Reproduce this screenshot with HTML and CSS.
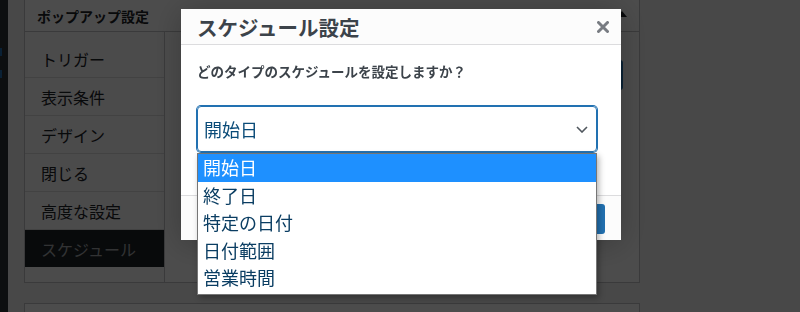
FILE: index.html
```html
<!DOCTYPE html>
<html lang="ja">
<head>
  <meta charset="UTF-8">
  <title>ポップアップ設定</title>
  <link rel="stylesheet" href="styles.css">
</head>
<body>

  <div class="admin">
    <!-- Admin menu edge -->
    <div class="admin-menu">
      <span class="menu-mark"></span>
      <span class="menu-mark"></span>
    </div>

    <div class="content">
      <!-- Popup settings box -->
      <div class="postbox">
        <div class="postbox-header">
          <h2>ポップアップ設定</h2>
          <span class="toggle-arrow"></span>
        </div>
        <div class="postbox-inside">
          <ul class="tabs">
            <li class="tab">トリガー</li>
            <li class="tab">表示条件</li>
            <li class="tab">デザイン</li>
            <li class="tab">閉じる</li>
            <li class="tab">高度な設定</li>
            <li class="tab tab-active">スケジュール</li>
          </ul>
          <div class="tab-panel">
            <button class="button-primary">スケジュールを追加</button>
          </div>
        </div>
      </div>

      <div class="postbox postbox-next"></div>
    </div>
  </div>

  <!-- Modal -->
  <div class="backdrop"></div>
  <div class="modal">
    <div class="modal-header">
      <h3>スケジュール設定</h3>
      <span class="modal-close">
        <svg width="12" height="12" viewBox="0 0 12 12"><path d="M1.5 1.5L10.5 10.5M10.5 1.5L1.5 10.5" stroke="#787c82" stroke-width="3" stroke-linecap="round"/></svg>
      </span>
    </div>
    <div class="modal-body">
      <p class="question">どのタイプのスケジュールを設定しますか？</p>
      <div class="select-wrap">
        <div class="select">
          <span>開始日</span>
          <svg width="12" height="7" viewBox="0 0 12 7"><path d="M1 1L6 6L11 1" fill="none" stroke="#50575e" stroke-width="1.6"/></svg>
        </div>
        <ul class="select-list">
          <li class="option option-selected">開始日</li>
          <li class="option">終了日</li>
          <li class="option">特定の日付</li>
          <li class="option">日付範囲</li>
          <li class="option">営業時間</li>
        </ul>
      </div>
    </div>
    <div class="modal-footer">
      <button class="button-primary">追加</button>
    </div>
  </div>

</body>
</html>
```

FILE: styles.css
```css
/* Page */
body {
  margin: 0;
  background-color: #f0f0f1;
  font-family: "Noto Sans CJK JP", "Noto Sans", sans-serif;
  color: #1d2327;
  overflow: hidden;
}
ul {
  margin: 0;
  padding: 0;
  list-style: none;
}
.admin {
  display: flex;
  height: 312px;
  overflow: hidden;
}
.admin-menu {
  width: 8px;
  background-color: #2c3338;
  display: flex;
  flex-direction: column;
  gap: 14px;
  padding-top: 48px;
  box-sizing: border-box;
}
.menu-mark {
  display: block;
  width: 2px;
  height: 8px;
  background-color: #2271b1;
}
.content {
  padding-left: 16px;
}

/* Settings box */
.postbox {
  width: 614px;
  margin-top: -1px;
  border: 1px solid #c3c4c7;
  background-color: #fff;
}
.postbox-header {
  height: 31px;
  border-bottom: 1px solid #c3c4c7;
  display: flex;
  align-items: center;
  justify-content: space-between;
  padding: 0 12px;
}
.postbox-header h2 {
  margin: 0;
  font-size: 14px;
  font-weight: 700;
}
.toggle-arrow {
  width: 0;
  height: 0;
  margin-top: -4px;
  border-left: 5px solid transparent;
  border-right: 5px solid transparent;
  border-bottom: 6px solid #1d2327;
}
.postbox-inside {
  display: flex;
  height: 250px;
}
.tabs {
  width: 139px;
  border-right: 1px solid #c3c4c7;
  padding-top: 8px;
  background-color: #fafafa;
}
.tab {
  height: 37px;
  border-bottom: 1px solid #dcdcde;
  padding-left: 16px;
  display: flex;
  align-items: center;
  font-size: 16px;
}
.tab-active {
  height: 37px;
  border-bottom: none;
  background-color: #1d2327;
  color: #a7aaad;
}
.tab-panel {
  flex: 1;
  display: flex;
  justify-content: flex-end;
  align-items: flex-start;
  padding: 28px 16px 0 0;
}
.button-primary {
  background-color: #2271b1;
  color: #fff;
  border: none;
  border-radius: 3px;
  height: 30px;
  padding: 0 12px;
  font-family: inherit;
  font-size: 13px;
}
.postbox-next {
  margin-top: 20px;
  height: 8px;
}

/* Modal */
.backdrop {
  position: fixed;
  inset: 0;
  background-color: rgba(0, 0, 0, 0.7);
}
.modal {
  position: fixed;
  left: 181px;
  top: 9px;
  width: 440px;
  height: 231px;
  background-color: #fff;
  display: flex;
  flex-direction: column;
  box-shadow: 0 3px 30px rgba(0, 0, 0, 0.25);
}
.modal-header {
  height: 35px;
  border-bottom: 1px solid #dcdcde;
  background-color: #fcfcfc;
  display: flex;
  align-items: center;
  justify-content: space-between;
  padding: 0 12px 0 16px;
}
.modal-header h3 {
  margin: 0;
  font-size: 20.5px;
  font-weight: 700;
  color: #3c434a;
}
.modal-close {
  display: flex;
}
.modal-body {
  flex: 1;
  padding: 16px 0 0 16px;
}
.question {
  margin: 0;
  font-size: 13.5px;
  line-height: 20px;
  font-weight: 600;
  color: #3c434a;
}
.select-wrap {
  position: relative;
  width: 400px;
  margin-top: 25px;
}
.select {
  height: 44px;
  border: 1px solid #2271b1;
  box-shadow: 0 0 0 1px #2271b1;
  border-radius: 4px;
  display: flex;
  align-items: center;
  justify-content: space-between;
  padding: 0 8px 0 6px;
  font-size: 18px;
  color: #0a4b78;
}
.select-list {
  position: absolute;
  top: 47px;
  left: 0;
  width: 398px;
  border: 1px solid #767676;
  background-color: #fff;
  padding-bottom: 2px;
  box-shadow: 2px 3px 6px rgba(0, 0, 0, 0.3);
  z-index: 2;
}
.option {
  height: 27.5px;
  line-height: 27.5px;
  padding-left: 5px;
  font-size: 18px;
  color: #0a3d62;
}
.option-selected {
  background-color: #1e90ff;
  color: #fff;
}
.modal-footer {
  height: 45px;
  border-top: 1px solid #dcdcde;
  background-color: #fcfcfc;
  display: flex;
  justify-content: flex-end;
  align-items: flex-start;
  padding: 8px 16px 0 0;
  box-sizing: border-box;
}
```
